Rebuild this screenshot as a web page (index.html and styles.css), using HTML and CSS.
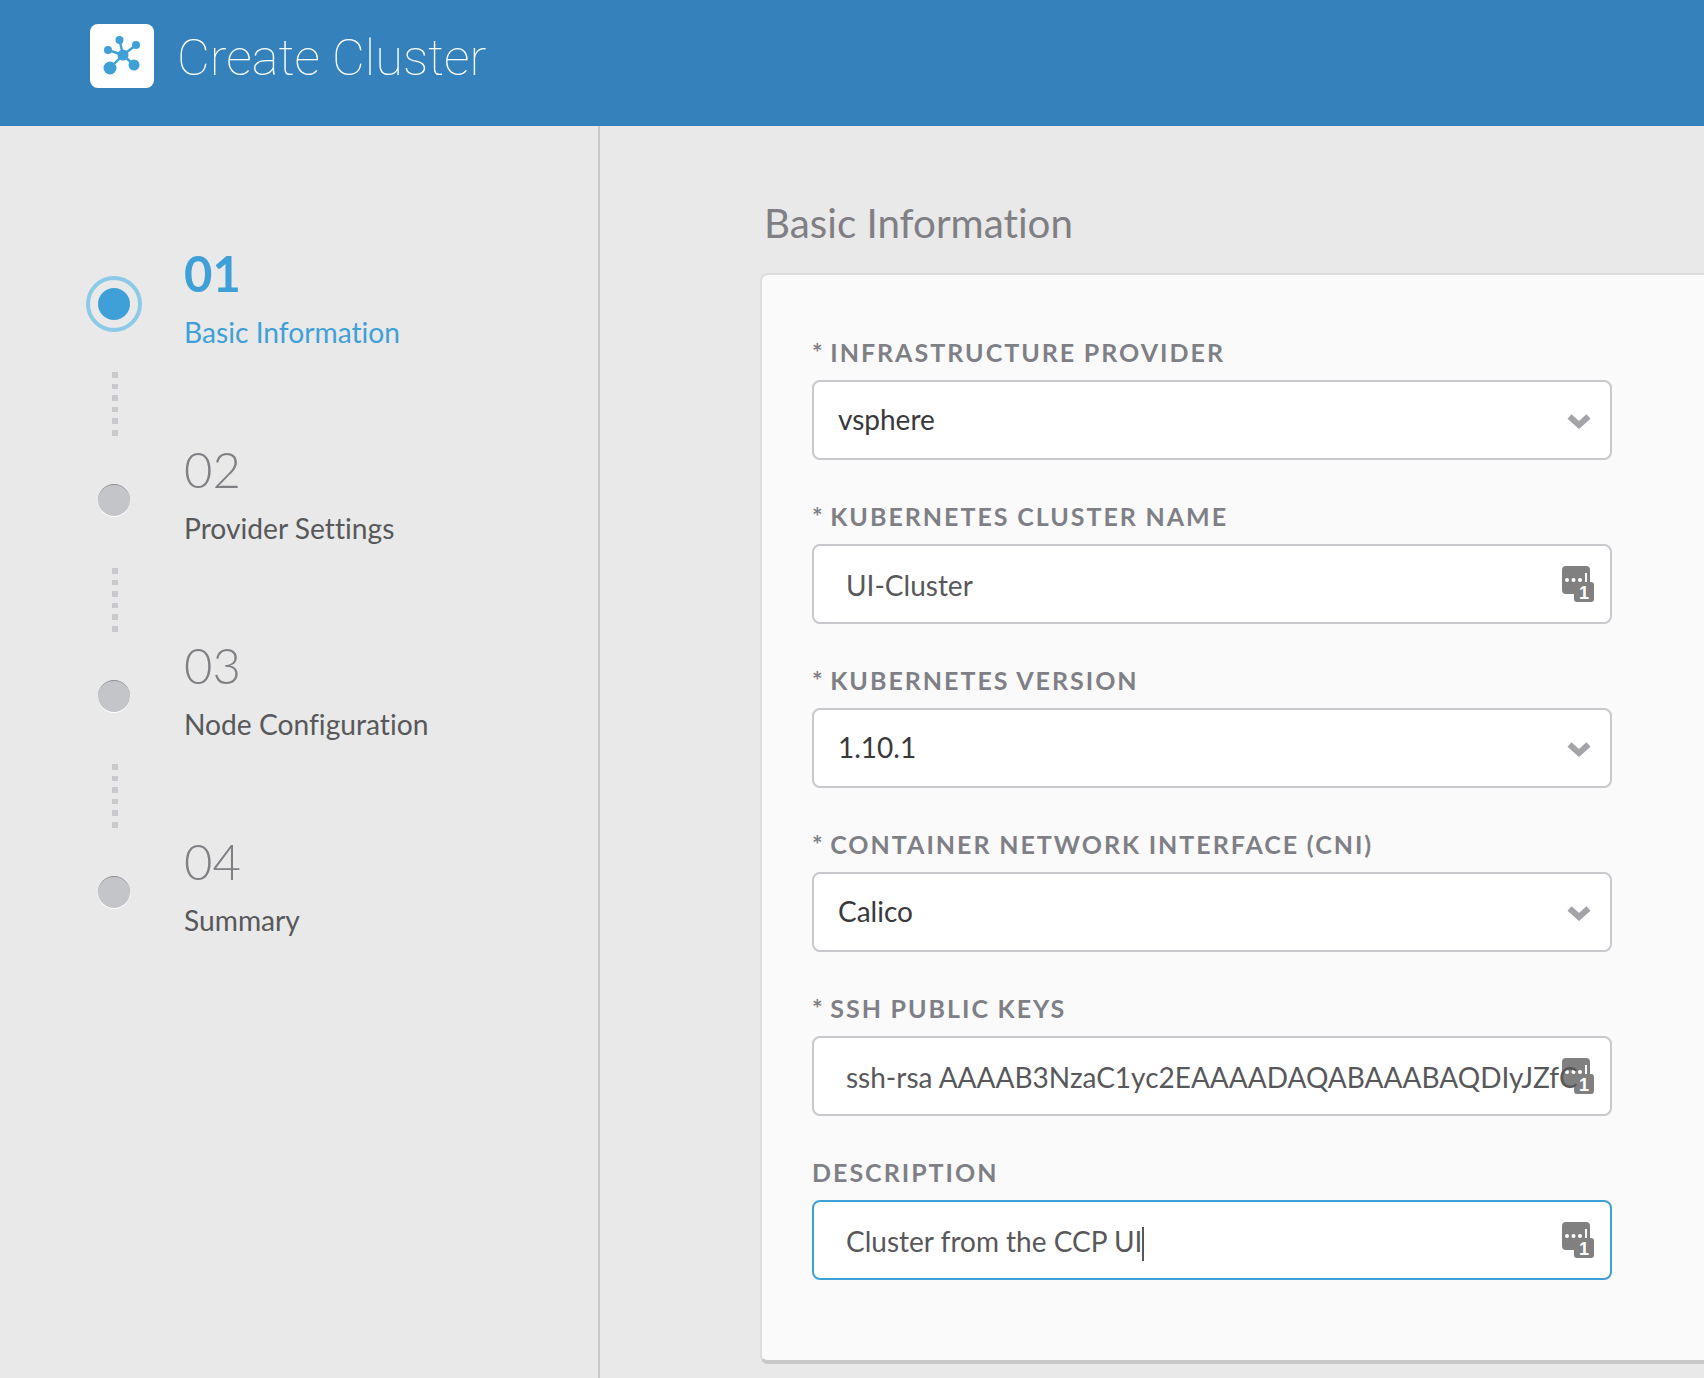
FILE: index.html
```html
<!doctype html>
<html lang="en">
<head>
	<meta charset="UTF-8">
	<title>Create Cluster</title>
	<link rel="stylesheet" href="styles.css">
</head>
<body>
	<header class="topbar">
		<div class="logo">
			<svg width="64" height="64" viewBox="0 0 64 64">
				<g stroke="#3fa0d8" stroke-width="2.4">
					<line x1="33" y1="31" x2="29.5" y2="16"/>
					<line x1="33" y1="31" x2="46" y2="21"/>
					<line x1="33" y1="31" x2="18" y2="26"/>
					<line x1="33" y1="31" x2="20" y2="44"/>
					<line x1="33" y1="31" x2="44" y2="41"/>
				</g>
				<g fill="#3fa0d8">
					<circle cx="33" cy="31" r="5.5"/>
					<circle cx="29.5" cy="16" r="4"/>
					<circle cx="46" cy="21" r="4"/>
					<circle cx="18" cy="26" r="4"/>
					<circle cx="20" cy="44" r="6.5"/>
					<circle cx="44" cy="41" r="5.5"/>
				</g>
			</svg>
		</div>
		<h1 class="page-title">Create Cluster</h1>
	</header>

	<div class="main">
		<aside class="side">
			<div class="step active">
				<div class="marker">
					<div class="ring"><span class="dot"></span></div>
					<div class="dots"></div>
				</div>
				<div class="step-text">
					<div class="num">01</div>
					<div class="name">Basic Information</div>
				</div>
			</div>
			<div class="step">
				<div class="marker">
					<div class="ring"><span class="dot"></span></div>
					<div class="dots"></div>
				</div>
				<div class="step-text">
					<div class="num">02</div>
					<div class="name">Provider Settings</div>
				</div>
			</div>
			<div class="step">
				<div class="marker">
					<div class="ring"><span class="dot"></span></div>
					<div class="dots"></div>
				</div>
				<div class="step-text">
					<div class="num">03</div>
					<div class="name">Node Configuration</div>
				</div>
			</div>
			<div class="step">
				<div class="marker">
					<div class="ring"><span class="dot"></span></div>
				</div>
				<div class="step-text">
					<div class="num">04</div>
					<div class="name">Summary</div>
				</div>
			</div>
		</aside>

		<section class="content">
			<h2 class="section-title">Basic Information</h2>
			<div class="card">
				<div class="field">
					<label><span class="req">*</span> INFRASTRUCTURE PROVIDER</label>
					<div class="box select">
						<span class="val">vsphere</span>
						<svg class="chev" width="24" height="16" viewBox="0 0 24 16"><path d="M2.5 3.5 L12 12 L21.5 3.5" fill="none" stroke="#a3a3a8" stroke-width="6"/></svg>
					</div>
				</div>
				<div class="field">
					<label><span class="req">*</span> KUBERNETES CLUSTER NAME</label>
					<div class="box input">
						<svg class="keys" width="32" height="38" viewBox="0 0 32 38">
							<rect width="28" height="28" rx="4" fill="#808080"/>
							<circle cx="5" cy="14" r="2" fill="#fff"/>
							<circle cx="11.5" cy="14" r="2" fill="#fff"/>
							<circle cx="18" cy="14" r="2" fill="#fff"/>
							<rect x="23" y="7" width="2" height="10" fill="#fff"/>
							<rect x="12" y="16" width="20" height="20" rx="3" fill="#808080"/>
							<text x="22" y="33" class="key-num">1</text>
						</svg>
						<span class="val">UI-Cluster</span>
					</div>
				</div>
				<div class="field">
					<label><span class="req">*</span> KUBERNETES VERSION</label>
					<div class="box select">
						<span class="val">1.10.1</span>
						<svg class="chev" width="24" height="16" viewBox="0 0 24 16"><path d="M2.5 3.5 L12 12 L21.5 3.5" fill="none" stroke="#a3a3a8" stroke-width="6"/></svg>
					</div>
				</div>
				<div class="field">
					<label><span class="req">*</span> CONTAINER NETWORK INTERFACE (CNI)</label>
					<div class="box select">
						<span class="val">Calico</span>
						<svg class="chev" width="24" height="16" viewBox="0 0 24 16"><path d="M2.5 3.5 L12 12 L21.5 3.5" fill="none" stroke="#a3a3a8" stroke-width="6"/></svg>
					</div>
				</div>
				<div class="field">
					<label><span class="req">*</span> SSH PUBLIC KEYS</label>
					<div class="box input">
						<svg class="keys" width="32" height="38" viewBox="0 0 32 38">
							<rect width="28" height="28" rx="4" fill="#808080"/>
							<circle cx="5" cy="14" r="2" fill="#fff"/>
							<circle cx="11.5" cy="14" r="2" fill="#fff"/>
							<circle cx="18" cy="14" r="2" fill="#fff"/>
							<rect x="23" y="7" width="2" height="10" fill="#fff"/>
							<rect x="12" y="16" width="20" height="20" rx="3" fill="#808080"/>
							<text x="22" y="33" class="key-num">1</text>
						</svg>
						<span class="val">ssh-rsa AAAAB3NzaC1yc2EAAAADAQABAAABAQDIyJZfC</span>
					</div>
				</div>
				<div class="field">
					<label>DESCRIPTION</label>
					<div class="box input focus">
						<svg class="keys" width="32" height="38" viewBox="0 0 32 38">
							<rect width="28" height="28" rx="4" fill="#808080"/>
							<circle cx="5" cy="14" r="2" fill="#fff"/>
							<circle cx="11.5" cy="14" r="2" fill="#fff"/>
							<circle cx="18" cy="14" r="2" fill="#fff"/>
							<rect x="23" y="7" width="2" height="10" fill="#fff"/>
							<rect x="12" y="16" width="20" height="20" rx="3" fill="#808080"/>
							<text x="22" y="33" class="key-num">1</text>
						</svg>
						<span class="val">Cluster from the CCP UI<i class="caret"></i></span>
					</div>
				</div>
			</div>
		</section>
	</div>
</body>
</html>
```

FILE: styles.css
```css
*{
	margin: 0;
	padding: 0;
	box-sizing: border-box;
}
html,body{
	height: 100%;
	overflow: hidden;
}
body{
	font-family: Lato, "Liberation Sans", sans-serif;
	font-variant-ligatures: none;
	background: #e9e9e9;
	color: #58585b;
	display: flex;
	flex-direction: column;
}
.key-num{
	font: 700 18px "Liberation Sans", sans-serif;
	fill: #fff;
	text-anchor: middle;
}

/* top bar */
.topbar{
	height: 126px;
	flex: none;
	background: #3481bc;
	display: flex;
	align-items: flex-start;
	padding: 24px 0 0 90px;
}
.logo{
	width: 64px;
	height: 64px;
	background: #fff;
	border-radius: 8px;
}
.logo svg{
	display: block;
}
.page-title{
	margin: 2px 0 0 23px;
	font-family: Roboto, sans-serif;
	font-weight: 100;
	font-size: 50.6px;
	line-height: 64px;
	color: #fff;
}

/* left steps */
.main{
	flex: 1;
	display: flex;
	min-height: 0;
}
.side{
	width: 600px;
	flex: none;
	border-right: 2px solid #c9c9cc;
	padding: 150px 0 0 86px;
}
.step{
	height: 196px;
	display: flex;
}
.marker{
	width: 56px;
	margin-right: 42px;
	display: flex;
	flex-direction: column;
	align-items: center;
}
.ring{
	width: 56px;
	height: 56px;
	flex: none;
	border-radius: 50%;
	display: flex;
	align-items: center;
	justify-content: center;
}
.dot{
	width: 32px;
	height: 32px;
	border-radius: 50%;
	background: #c4c5c9;
	border-top: 1px solid #8f9094;
	box-shadow: 0 1px 0 #fff;
}
.active .ring{
	border: 4px solid #8ccbe8;
}
.active .dot{
	background: #3fa0d8;
	border: 0;
	box-shadow: none;
}
.dots{
	width: 6px;
	height: 64px;
	margin: 40px 0 0 2px;
	background: repeating-linear-gradient(to bottom, #c9c9cd 0, #c9c9cd 5.6px, transparent 5.6px, transparent 11.6px);
}
.step-text{
	margin-top: -33px;
}
.num{
	font-size: 49px;
	font-weight: 300;
	line-height: 60px;
	color: #7f7f84;
}
.name{
	margin-top: 9px;
	font-size: 28.2px;
	line-height: 40px;
	color: #58585b;
}
.active .num{
	font-weight: 700;
	color: #3fa0d8;
}
.active .name{
	color: #3fa0d8;
}

/* form */
.content{
	flex: 1;
	min-width: 0;
	padding: 73px 0 0 160px;
}
.section-title{
	margin-left: 4px;
	font-size: 40.3px;
	font-weight: 400;
	line-height: 48px;
	color: #7f7f84;
}
.card{
	margin-top: 26px;
	height: 1091px;
	background: #fafafa;
	border: 2px solid #dedede;
	border-right: 0;
	border-bottom: 4px solid #c8c8c8;
	border-radius: 8px 0 0 8px;
	padding: 62px 0 0 50px;
}
.field{
	width: 800px;
	height: 164px;
}
.field label{
	display: block;
	height: 43px;
	font-size: 25px;
	font-weight: 700;
	line-height: 30px;
	letter-spacing: 2px;
	word-spacing: -0.5px;
	color: #7f7f86;
}
.req{
	margin-right: -2px;
}
.box{
	height: 80px;
	background: #fff;
	border: 2px solid #c8c8cd;
	border-radius: 8px;
	display: flex;
	align-items: center;
	font-size: 28px;
	position: relative;
	overflow: hidden;
}
.select{
	padding: 0 24px 2px;
	color: #39393c;
}
.input{
	padding: 1px 22px 0 32px;
}
.val{
	white-space: nowrap;
	flex: 1;
	position: relative;
	height: 36px;
	line-height: 36px;
}
.chev{
	position: absolute;
	right: 19px;
	top: 31px;
}
.keys{
	position: absolute;
	right: 16px;
	top: 20px;
}
.focus{
	border-color: #3fa0d8;
}
.caret{
	display: inline-block;
	width: 2px;
	height: 34px;
	background: #58585b;
	vertical-align: middle;
}
```
